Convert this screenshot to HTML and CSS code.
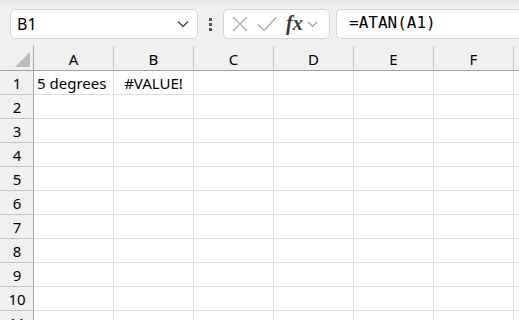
FILE: index.html
```html
<!DOCTYPE html>
<html lang="en">

<head>
    <meta charset="UTF-8" />
    <title>Sheet</title>
    <link rel="stylesheet" href="styles.css">
</head>

<body>
    <!-- Formula bar -->
    <div class="toolbar">
        <div class="name-box">
            <span>B1</span>
            <svg class="chev" width="12" height="8" viewBox="0 0 12 8"><path d="M1 1.5 L6 6.5 L11 1.5" fill="none" stroke="#444" stroke-width="1.3"/></svg>
        </div>
        <div class="dots"><i></i><i></i><i></i></div>
        <div class="fx-box">
            <svg width="16" height="16" viewBox="0 0 16 16"><path d="M1 1 L15 15 M15 1 L1 15" stroke="#a6a6a6" stroke-width="1.2"/></svg>
            <svg width="20" height="16" viewBox="0 0 20 16"><path d="M1 8.5 L7 14.5 L19 1.5" fill="none" stroke="#a6a6a6" stroke-width="1.2"/></svg>
            <span class="fx">fx</span>
            <svg width="11" height="7" viewBox="0 0 11 7"><path d="M1 1 L5.5 5.5 L10 1" fill="none" stroke="#9a9a9a" stroke-width="1.1"/></svg>
        </div>
        <div class="formula">=ATAN(A1)</div>
    </div>

    <!-- Grid -->
    <div class="sheet">
        <div class="corner"><span class="tri"></span></div>
        <div class="col-head">A</div>
        <div class="col-head">B</div>
        <div class="col-head">C</div>
        <div class="col-head">D</div>
        <div class="col-head">E</div>
        <div class="col-head">F</div>
        <div class="col-head"></div>

        <div class="row-head">1</div>
        <div class="cell">5 degrees</div>
        <div class="cell center">#VALUE!</div>
        <div class="cell"></div><div class="cell"></div><div class="cell"></div><div class="cell"></div><div class="cell"></div>
    </div>

    <script>
        // fill remaining empty rows
        const sheet = document.querySelector(".sheet");
        for (let r = 2; r <= 11; r++) {
            const head = document.createElement("div");
            head.className = "row-head";
            head.textContent = r;
            sheet.appendChild(head);
            for (let c = 0; c < 7; c++) {
                const cell = document.createElement("div");
                cell.className = "cell";
                sheet.appendChild(cell);
            }
        }
    </script>
</body>

</html>
```

FILE: styles.css
```css
* {
    box-sizing: border-box;
}

body {
    margin: 0;
    padding: 0;
    background: #f0f0f0;
    font-family: 'Noto Sans', 'Open Sans', sans-serif;
    color: #000;
    overflow: hidden;
    width: 519px;
    height: 320px;
}

.toolbar {
    height: 46px;
    display: flex;
    align-items: flex-start;
    padding: 9px 0 0 10px;
    overflow: hidden;
    background: linear-gradient(to bottom, #e4e4e4 0, #ececec 4px, #f0f0f0 8px);
}

.toolbar > * {
    flex-shrink: 0;
}

.name-box {
    width: 188px;
    height: 30px;
    background: #fff;
    border: 1px solid #d4d4d4;
    border-radius: 5px;
    display: flex;
    align-items: center;
    justify-content: space-between;
    padding: 0 8px 0 6px;
    font-size: 16px;
}

.dots {
    width: 25px;
    height: 30px;
    display: flex;
    flex-direction: column;
    align-items: center;
    justify-content: center;
    gap: 2px;
}

.dots i {
    width: 3px;
    height: 3px;
    background: #555;
}

.fx-box {
    width: 107px;
    height: 30px;
    background: #fff;
    border: 1px solid #d4d4d4;
    border-radius: 5px;
    display: flex;
    align-items: center;
    padding: 0 6px 0 8px;
    gap: 9px;
}

.fx-box svg:last-child {
    margin-left: -5px;
}

.fx {
    font-family: 'Liberation Serif', serif;
    font-style: italic;
    font-weight: bold;
    font-size: 20px;
    color: #3a3a3a;
    line-height: 1;
    margin-top: -2px;
}

.formula {
    margin-left: 6px;
    width: 200px;
    height: 30px;
    background: #fff;
    border: 1px solid #d4d4d4;
    border-right: none;
    border-radius: 5px 0 0 5px;
    padding: 3px 0 0 12px;
    font-family: 'DejaVu Sans Mono', monospace;
    font-size: 16px;
}

.sheet {
    display: grid;
    grid-template-columns: 34px repeat(6, 80px) 6px;
    grid-template-rows: 25px;
    grid-auto-rows: 24px;
    font-size: 15px;
    overflow: hidden;
}

.corner {
    border-right: 1px solid #a8a8a8;
    border-bottom: 1px solid #a0a0a0;
    position: relative;
}

.tri {
    position: absolute;
    right: 3px;
    bottom: 3px;
    width: 0;
    height: 0;
    border-left: 15px solid transparent;
    border-bottom: 15px solid #bcbcbc;
}

.col-head {
    border-right: 1px solid #c6c6c6;
    border-bottom: 1px solid #a0a0a0;
    display: flex;
    align-items: center;
    justify-content: center;
    padding-top: 1px;
}

.row-head {
    border-right: 1px solid #a8a8a8;
    border-bottom: 1px solid #c6c6c6;
    display: flex;
    align-items: center;
    justify-content: center;
    padding-left: 1px;
}

.cell {
    background: #fff;
    border-right: 1px solid #dedede;
    border-bottom: 1px solid #dedede;
    display: flex;
    align-items: center;
    padding-left: 3px;
    white-space: nowrap;
}

.cell.center {
    justify-content: center;
    padding-left: 0;
}
```
